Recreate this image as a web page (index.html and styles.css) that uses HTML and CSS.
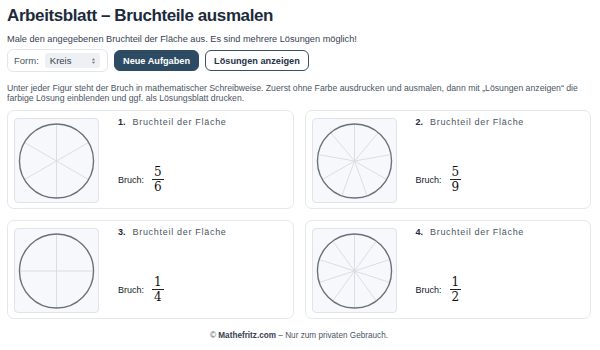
FILE: index.html
```html
<!DOCTYPE html>
<html lang="de">
<head>
<meta charset="utf-8">
<link rel="stylesheet" href="styles.css">
</head>
<body>
<div class="page">
  <h1 class="title">Arbeitsblatt – Bruchteile ausmalen</h1>
  <p class="lead">Male den angegebenen Bruchteil der Fläche aus. Es sind mehrere Lösungen möglich!</p>
  <div class="controls">
    <div class="field">
      <span class="field-label">Form:</span>
      <span class="select">Kreis
        <svg class="select-arrows" viewBox="0 0 6 10" width="5" height="8"><path d="M1 4 L3 1.5 L5 4 Z M1 6 L3 8.5 L5 6 Z" fill="#6b7280"/></svg>
      </span>
    </div>
    <button class="btn btn-primary">Neue Aufgaben</button>
    <button class="btn btn-outline">Lösungen anzeigen</button>
  </div>
  <p class="note">Unter jeder Figur steht der Bruch in mathematischer Schreibweise. Zuerst ohne Farbe ausdrucken und ausmalen, dann mit „Lösungen anzeigen“ die farbige Lösung einblenden und ggf. als Lösungsblatt drucken.</p>

  <div class="grid">
    <div class="card">
      <div class="figure">
        <svg viewBox="0 0 84 84" width="84" height="84">
          <g class="spokes">
            <line x1="42" y1="42" x2="42" y2="4.5"/>
            <line x1="42" y1="42" x2="74.48" y2="23.25"/>
            <line x1="42" y1="42" x2="74.48" y2="60.75"/>
            <line x1="42" y1="42" x2="42" y2="79.5"/>
            <line x1="42" y1="42" x2="9.52" y2="60.75"/>
            <line x1="42" y1="42" x2="9.52" y2="23.25"/>
          </g>
          <circle class="rim" cx="42" cy="42" r="37.5"/>
        </svg>
      </div>
      <div class="info">
        <div class="info-title"><b>1.</b><span>Bruchteil der Fläche</span></div>
        <div class="bruch">Bruch: <span class="frac"><span class="num">5</span><span class="den">6</span></span></div>
      </div>
    </div>

    <div class="card">
      <div class="figure">
        <svg viewBox="0 0 84 84" width="84" height="84">
          <g class="spokes">
            <line x1="42" y1="42" x2="42" y2="4.5"/>
            <line x1="42" y1="42" x2="66.10" y2="13.27"/>
            <line x1="42" y1="42" x2="78.93" y2="35.49"/>
            <line x1="42" y1="42" x2="74.48" y2="60.75"/>
            <line x1="42" y1="42" x2="54.83" y2="77.24"/>
            <line x1="42" y1="42" x2="29.17" y2="77.24"/>
            <line x1="42" y1="42" x2="9.52" y2="60.75"/>
            <line x1="42" y1="42" x2="5.07" y2="35.49"/>
            <line x1="42" y1="42" x2="17.90" y2="13.27"/>
          </g>
          <circle class="rim" cx="42" cy="42" r="37.5"/>
        </svg>
      </div>
      <div class="info">
        <div class="info-title"><b>2.</b><span>Bruchteil der Fläche</span></div>
        <div class="bruch">Bruch: <span class="frac"><span class="num">5</span><span class="den">9</span></span></div>
      </div>
    </div>

    <div class="card">
      <div class="figure">
        <svg viewBox="0 0 84 84" width="84" height="84">
          <g class="spokes">
            <line x1="42" y1="4.5" x2="42" y2="79.5"/>
            <line x1="4.5" y1="42" x2="79.5" y2="42"/>
          </g>
          <circle class="rim" cx="42" cy="42" r="37.5"/>
        </svg>
      </div>
      <div class="info">
        <div class="info-title"><b>3.</b><span>Bruchteil der Fläche</span></div>
        <div class="bruch">Bruch: <span class="frac"><span class="num">1</span><span class="den">4</span></span></div>
      </div>
    </div>

    <div class="card">
      <div class="figure">
        <svg viewBox="0 0 84 84" width="84" height="84">
          <g class="spokes">
            <line x1="42" y1="4.5" x2="42" y2="79.5"/>
            <line x1="64.04" y1="11.66" x2="19.96" y2="72.34"/>
            <line x1="77.67" y1="30.41" x2="6.33" y2="53.59"/>
            <line x1="77.67" y1="53.59" x2="6.33" y2="30.41"/>
            <line x1="64.04" y1="72.34" x2="19.96" y2="11.66"/>
          </g>
          <circle class="rim" cx="42" cy="42" r="37.5"/>
        </svg>
      </div>
      <div class="info">
        <div class="info-title"><b>4.</b><span>Bruchteil der Fläche</span></div>
        <div class="bruch">Bruch: <span class="frac"><span class="num">1</span><span class="den">2</span></span></div>
      </div>
    </div>
  </div>

  <footer class="footer">© <b>Mathefritz.com</b> – Nur zum privaten Gebrauch.</footer>
</div>
</body>
</html>
```

FILE: styles.css
```css
* { box-sizing: border-box; }
html, body { margin: 0; padding: 0; background: #ffffff; }
body {
  font-family: "Liberation Sans", Arial, sans-serif;
  color: #1f2937;
}
.page {
  padding: 4px 9px 0 7px;
}
.title {
  margin: 0;
  font-size: 17px;
  line-height: 24px;
  font-weight: 700;
  color: #1c2b3c;
  letter-spacing: -0.4px;
}
.lead {
  margin: 4px 0 0;
  font-size: 9.2px;
  line-height: 14px;
  color: #374151;
}
.controls {
  display: flex;
  align-items: center;
  gap: 6px;
  margin-top: 3px;
}
.field {
  display: flex;
  align-items: center;
  gap: 6px;
  height: 23px;
  width: 101px;
  padding: 0 7px 0 6px;
  border: 1px solid #e3e6eb;
  border-radius: 6px;
  font-size: 9.5px;
  color: #4b5563;
}
.select {
  flex: 1;
  display: flex;
  align-items: center;
  justify-content: space-between;
  height: 15px;
  padding: 0 4px 0 5px;
  background: #eef0f3;
  border-radius: 3px;
  color: #374151;
}
.select-arrows { display: block; }
.btn {
  height: 21px;
  padding: 0 8px;
  border-radius: 6px;
  font-family: inherit;
  font-size: 9.2px;
  font-weight: 700;
  cursor: pointer;
}
.btn-primary {
  background: #2e4b64;
  color: #ffffff;
  border: 1px solid #2e4b64;
}
.btn-outline {
  background: #ffffff;
  color: #1f3347;
  border: 1px solid #34506a;
}
.note {
  margin: 11px 0 0;
  font-size: 8.7px;
  line-height: 10px;
  color: #4b5563;
}
.grid {
  display: grid;
  grid-template-columns: 1fr 1fr;
  gap: 11px;
  margin-top: 7px;
}
.card {
  display: flex;
  gap: 19px;
  height: 99px;
  padding: 7px 6px;
  border: 1px solid #e6e8ec;
  border-radius: 7px;
}
.figure {
  width: 85px;
  height: 85px;
  flex: none;
  background: #f6f8fc;
  border: 1px solid #dfe4ec;
  border-radius: 4px;
  display: flex;
  align-items: center;
  justify-content: center;
}
.figure svg { display: block; }
.spokes line {
  stroke: #d8dde6;
  stroke-width: 1;
}
.rim {
  fill: none;
  stroke: #6d7079;
  stroke-width: 1.4;
}
.info {
  display: flex;
  flex-direction: column;
  margin-top: -2px;
}
.info-title {
  display: flex;
  gap: 7px;
  font-size: 9px;
  line-height: 12px;
  color: #4b5563;
}
.info-title span { letter-spacing: 0.7px; font-weight: 400; }
.info-title b { color: #1f2937; }
.bruch {
  margin-top: 38px;
  display: flex;
  align-items: center;
  gap: 8px;
  font-size: 9px;
  color: #111827;
}
.frac {
  display: inline-flex;
  flex-direction: column;
  align-items: center;
  font-family: "DejaVu Serif", "Liberation Serif", serif;
  font-size: 12px;
  line-height: 12px;
  color: #111;
}
.frac .num {
  padding: 0 2px 1px;
  border-bottom: 1px solid #222;
}
.frac .den { padding-top: 1px; }
.footer {
  margin-top: 12px;
  text-align: center;
  font-size: 8.2px;
  color: #4b5563;
}
.footer b { font-weight: 700; color: #374151; }
```
